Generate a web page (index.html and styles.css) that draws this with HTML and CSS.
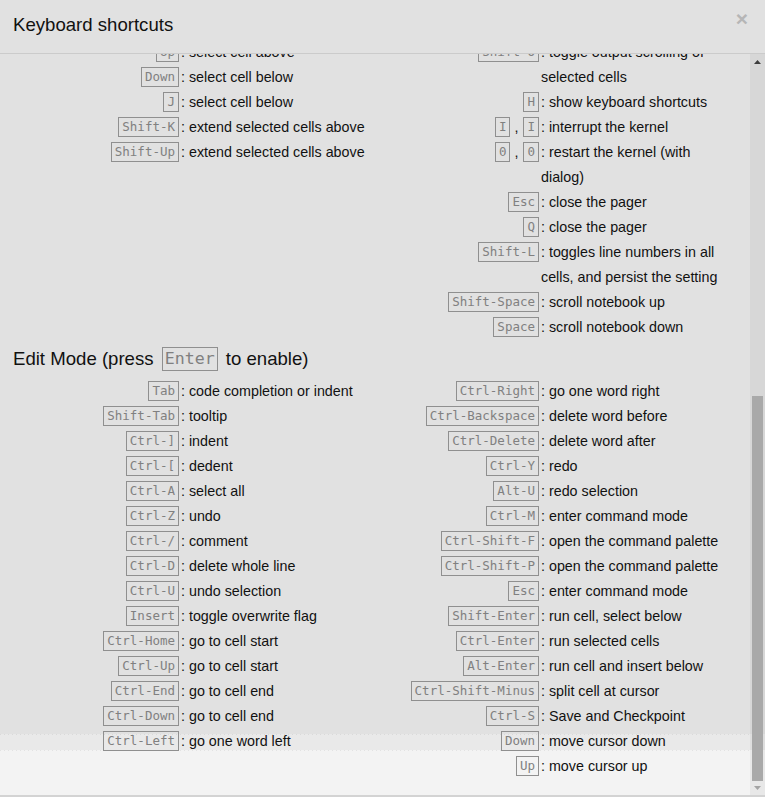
FILE: index.html
```html
<!DOCTYPE html>
<html lang="en">
<head>
<meta charset="utf-8">
<title>Keyboard shortcuts</title>
<link rel="stylesheet" href="styles.css">
</head>
<body>
<div class="modal">
  <div class="modal-header">
    <h4 class="modal-title">Keyboard shortcuts</h4>
    <span class="close">×</span>
  </div>
  <div class="modal-body">
    <div class="content">
      <div class="columns">
        <div class="col">
          <div class="sc"><span class="key"><kbd>Up</kbd></span><span class="descr">: select cell above</span></div>
          <div class="sc"><span class="key"><kbd>Down</kbd></span><span class="descr">: select cell below</span></div>
          <div class="sc"><span class="key"><kbd>J</kbd></span><span class="descr">: select cell below</span></div>
          <div class="sc"><span class="key"><kbd>Shift-K</kbd></span><span class="descr">: extend selected cells above</span></div>
          <div class="sc"><span class="key"><kbd>Shift-Up</kbd></span><span class="descr">: extend selected cells above</span></div>
        </div>
        <div class="col">
          <div class="sc"><span class="key"><kbd>Shift-O</kbd></span><span class="descr">: toggle output scrolling of selected cells</span></div>
          <div class="sc"><span class="key"><kbd>H</kbd></span><span class="descr">: show keyboard shortcuts</span></div>
          <div class="sc"><span class="key"><kbd>I</kbd><span class="sep">,</span><kbd>I</kbd></span><span class="descr">: interrupt the kernel</span></div>
          <div class="sc"><span class="key"><kbd>0</kbd><span class="sep">,</span><kbd>0</kbd></span><span class="descr">: restart the kernel (with dialog)</span></div>
          <div class="sc"><span class="key"><kbd>Esc</kbd></span><span class="descr">: close the pager</span></div>
          <div class="sc"><span class="key"><kbd>Q</kbd></span><span class="descr">: close the pager</span></div>
          <div class="sc"><span class="key"><kbd>Shift-L</kbd></span><span class="descr">: toggles line numbers in all cells, and persist the setting</span></div>
          <div class="sc"><span class="key"><kbd>Shift-Space</kbd></span><span class="descr">: scroll notebook up</span></div>
          <div class="sc"><span class="key"><kbd>Space</kbd></span><span class="descr">: scroll notebook down</span></div>
        </div>
      </div>

      <h4 class="section-title">Edit Mode (press <kbd>Enter</kbd> to enable)</h4>

      <div class="columns">
        <div class="col">
          <div class="sc"><span class="key"><kbd>Tab</kbd></span><span class="descr">: code completion or indent</span></div>
          <div class="sc"><span class="key"><kbd>Shift-Tab</kbd></span><span class="descr">: tooltip</span></div>
          <div class="sc"><span class="key"><kbd>Ctrl-]</kbd></span><span class="descr">: indent</span></div>
          <div class="sc"><span class="key"><kbd>Ctrl-[</kbd></span><span class="descr">: dedent</span></div>
          <div class="sc"><span class="key"><kbd>Ctrl-A</kbd></span><span class="descr">: select all</span></div>
          <div class="sc"><span class="key"><kbd>Ctrl-Z</kbd></span><span class="descr">: undo</span></div>
          <div class="sc"><span class="key"><kbd>Ctrl-/</kbd></span><span class="descr">: comment</span></div>
          <div class="sc"><span class="key"><kbd>Ctrl-D</kbd></span><span class="descr">: delete whole line</span></div>
          <div class="sc"><span class="key"><kbd>Ctrl-U</kbd></span><span class="descr">: undo selection</span></div>
          <div class="sc"><span class="key"><kbd>Insert</kbd></span><span class="descr">: toggle overwrite flag</span></div>
          <div class="sc"><span class="key"><kbd>Ctrl-Home</kbd></span><span class="descr">: go to cell start</span></div>
          <div class="sc"><span class="key"><kbd>Ctrl-Up</kbd></span><span class="descr">: go to cell start</span></div>
          <div class="sc"><span class="key"><kbd>Ctrl-End</kbd></span><span class="descr">: go to cell end</span></div>
          <div class="sc"><span class="key"><kbd>Ctrl-Down</kbd></span><span class="descr">: go to cell end</span></div>
          <div class="sc"><span class="key"><kbd>Ctrl-Left</kbd></span><span class="descr">: go one word left</span></div>
        </div>
        <div class="col">
          <div class="sc"><span class="key"><kbd>Ctrl-Right</kbd></span><span class="descr">: go one word right</span></div>
          <div class="sc"><span class="key"><kbd>Ctrl-Backspace</kbd></span><span class="descr">: delete word before</span></div>
          <div class="sc"><span class="key"><kbd>Ctrl-Delete</kbd></span><span class="descr">: delete word after</span></div>
          <div class="sc"><span class="key"><kbd>Ctrl-Y</kbd></span><span class="descr">: redo</span></div>
          <div class="sc"><span class="key"><kbd>Alt-U</kbd></span><span class="descr">: redo selection</span></div>
          <div class="sc"><span class="key"><kbd>Ctrl-M</kbd></span><span class="descr">: enter command mode</span></div>
          <div class="sc"><span class="key"><kbd>Ctrl-Shift-F</kbd></span><span class="descr">: open the command palette</span></div>
          <div class="sc"><span class="key"><kbd>Ctrl-Shift-P</kbd></span><span class="descr">: open the command palette</span></div>
          <div class="sc"><span class="key"><kbd>Esc</kbd></span><span class="descr">: enter command mode</span></div>
          <div class="sc"><span class="key"><kbd>Shift-Enter</kbd></span><span class="descr">: run cell, select below</span></div>
          <div class="sc"><span class="key"><kbd>Ctrl-Enter</kbd></span><span class="descr">: run selected cells</span></div>
          <div class="sc"><span class="key"><kbd>Alt-Enter</kbd></span><span class="descr">: run cell and insert below</span></div>
          <div class="sc"><span class="key"><kbd>Ctrl-Shift-Minus</kbd></span><span class="descr">: split cell at cursor</span></div>
          <div class="sc"><span class="key"><kbd>Ctrl-S</kbd></span><span class="descr">: Save and Checkpoint</span></div>
          <div class="sc"><span class="key"><kbd>Down</kbd></span><span class="descr">: move cursor down</span></div>
          <div class="sc"><span class="key"><kbd>Up</kbd></span><span class="descr">: move cursor up</span></div>
        </div>
      </div>
    </div>
    <div class="scrollbar">
      <div class="sb-btn"><svg width="7" height="4" viewBox="0 0 7 4"><polygon points="0,4 3.5,0 7,4" fill="#3d3d3d"/></svg></div>
      <div class="sb-track"><div class="sb-thumb"></div></div>
      <div class="sb-btn sb-btn-down"><svg width="7" height="4" viewBox="0 0 7 4"><polygon points="0,0 7,0 3.5,4" fill="#a4a4a4"/></svg></div>
    </div>
  </div>
</div>
</body>
</html>
```

FILE: styles.css
```css
html, body {
  margin: 0;
  padding: 0;
}

body {
  width: 765px;
  height: 797px;
  overflow: hidden;
  font-family: "Liberation Sans", Arial, sans-serif;
  color: #111;
  background: #e1e1e1;
}

.modal {
  width: 765px;
  height: 797px;
  display: flex;
  flex-direction: column;
  box-sizing: border-box;
  border-bottom: 2px solid #d3d3d3;
  background:
    repeating-linear-gradient(to right, #d9d9d9 0 1px, transparent 1px 4px) 0 734px / 750px 1px no-repeat,
    repeating-linear-gradient(to right, #e2e2e2 0 1px, transparent 1px 4px) 0 750px / 750px 1px no-repeat,
    linear-gradient(to bottom, #e1e1e1 0 734px, #e9e9e9 734px 750px, #f3f3f3 750px);
}

.modal-header {
  height: 53px;
  flex: none;
  display: flex;
  align-items: center;
  justify-content: space-between;
  padding: 0 17px 0 13px;
  border-bottom: 1px solid #cbcbcb;
}

.modal-title {
  margin: -3px 0 0 0;
  font-size: 18.6px;
  font-weight: normal;
  line-height: 1;
}

.close {
  font-size: 21px;
  font-weight: bold;
  line-height: 1;
  color: #b6b6b6;
  margin-top: -17px;
}

.modal-body {
  flex: 1;
  display: flex;
  min-height: 0;
}

.content {
  flex: 1;
  overflow: hidden;
  padding-left: 13px;
}

.content > .columns:first-child {
  margin-top: -14px;
}

.columns {
  display: grid;
  grid-template-columns: 360px 360px;
}

.sc {
  display: flex;
  font-size: 14.3px;
  line-height: 25px;
}

.key {
  flex: none;
  width: 168px;
  text-align: right;
  white-space: nowrap;
}

.descr {
  flex: none;
  width: 191px;
}

kbd {
  display: inline-block;
  vertical-align: middle;
  font-family: "DejaVu Sans Mono", monospace;
  font-size: 12.5px;
  line-height: 16px;
  padding: 1px 3px;
  border: 1px solid #8f8f8f;
  color: #808080;
  margin: -2px 2px 0 2px;
}

.sep {
  padding: 0 3px 0 2px;
}

.section-title {
  margin: 0;
  height: 39px;
  line-height: 38px;
  font-size: 18.6px;
  font-weight: normal;
}

.section-title kbd {
  font-size: 16.6px;
  line-height: 20px;
  padding: 1px 2px;
  margin: -3px 3px 0 3px;
}

.scrollbar {
  flex: none;
  width: 15px;
  display: flex;
  flex-direction: column;
  background: rgba(0, 0, 0, 0.045);
}

.sb-btn {
  height: 15px;
  flex: none;
  display: flex;
  align-items: center;
  justify-content: center;
}

.sb-btn svg {
  display: block;
}

.sb-btn-down {
  height: 14px;
}

.sb-track {
  flex: 1;
  display: flex;
  flex-direction: column;
  justify-content: flex-end;
}

.sb-thumb {
  height: 385px;
  margin: 0 2px 0 2px;
  background: #a9a9a9;
}
```
